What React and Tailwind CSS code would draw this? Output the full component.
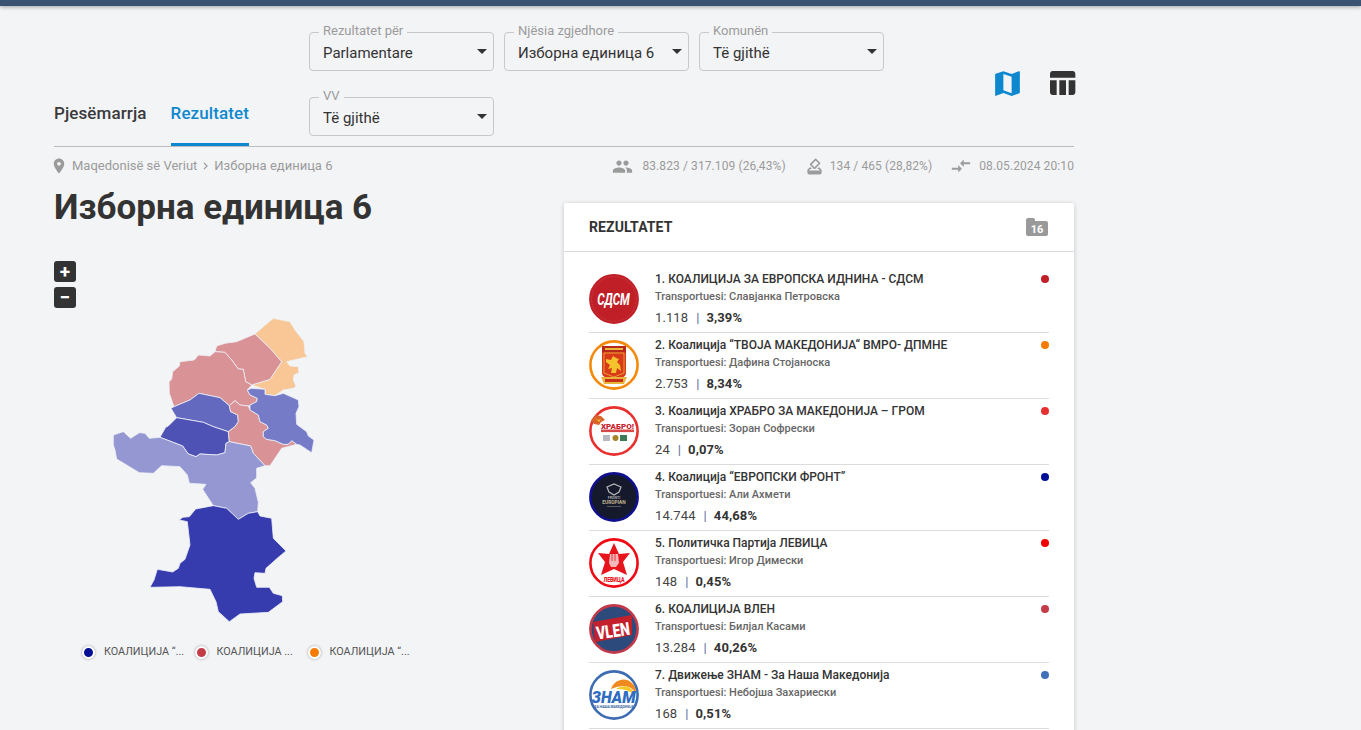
const P = {
  pin: "M12 2C8.13 2 5 5.13 5 9c0 5.25 7 13 7 13s7-7.75 7-13c0-3.87-3.13-7-7-7zm0 9.5c-1.38 0-2.5-1.12-2.5-2.5s1.12-2.5 2.5-2.5 2.5 1.12 2.5 2.5-1.12 2.5-2.5 2.5z",
  people: "M16 11c1.66 0 2.99-1.34 2.99-3S17.66 5 16 5c-1.66 0-3 1.34-3 3s1.34 3 3 3zm-8 0c1.66 0 2.99-1.34 2.99-3S9.66 5 8 5C6.34 5 5 6.34 5 8s1.34 3 3 3zm0 2c-2.33 0-7 1.17-7 3.5V19h14v-2.5c0-2.33-4.67-3.5-7-3.5zm8 0c-.29 0-.62.02-.97.05 1.16.84 1.97 1.97 1.97 3.45V19h6v-2.5c0-2.33-4.67-3.5-7-3.5z",
  vote: "M18 13h-.68l-2 2h1.91L19 17H5l1.78-2h2.05l-2-2H6l-3 3v4c0 1.1.89 2 1.99 2H19c1.1 0 2-.89 2-2v-4l-3-3zm-1-5.05l-4.95 4.95-3.54-3.54 4.95-4.95L17 7.95zm-4.24-5.66L6.39 8.66c-.39.39-.39 1.02 0 1.41l4.95 4.95c.39.39 1.02.39 1.41 0l6.36-6.36c.39-.39.39-1.02 0-1.41L14.16 2.3c-.38-.4-1.01-.4-1.4-.01z",
  arrows: "M9.01 14H2v2h7.01v3L13 15l-3.99-4v3zm5.98-1v-3H22V8h-7.01V5L11 9l3.99 4z",
  map: "M20.5 3l-.16.03L15 5.1 9 3 3.36 4.9c-.21.07-.36.25-.36.48V20.5c0 .28.22.5.5.5l.16-.03L9 18.9l6 2.1 5.64-1.9c.21-.07.36-.25.36-.48V3.5c0-.28-.22-.5-.5-.5zM15 19l-6-2.11V5l6 2.11V19z",
  table: "M10 10.02h5V21h-5zM17 21h3c1.1 0 2-.9 2-2v-9h-5v11zm3-18H5c-1.1 0-2 .9-2 2v3h19V5c0-1.1-.9-2-2-2zM3 19c0 1.1.9 2 2 2h3V10H3v9z",
};

function Ico({ d, className }) {
  return (
    <svg viewBox="0 0 24 24" className={className} fill="currentColor">
      <path d={d} />
    </svg>
  );
}

function Select({ label, value }) {
  return (
    <div className="relative flex h-[39px] w-[185px] items-center rounded-[4px] border border-[#c8c8c8] pl-[13px] pt-[2px]">
      <span className="absolute -top-[10px] left-[9px] bg-[#f3f4f6] px-[4px] text-[13px] leading-[16px] text-[#9b9b9b]">{label}</span>
      <span className="text-[15px] leading-[20px] text-[#333]">{value}</span>
      <svg viewBox="0 0 10 5" className="absolute right-[6px] top-[16px] h-[5px] w-[10px] text-[#333]" fill="currentColor">
        <path d="M0 0h10L5 5z" />
      </svg>
    </div>
  );
}

function Stat({ d, icon, text, gap }) {
  return (
    <span className={`flex items-center ${gap}`}>
      <Ico d={d} className={icon} />
      <span>{text}</span>
    </span>
  );
}

function Ring({ color, bg = "#fff", children }) {
  return (
    <svg viewBox="0 0 50 50" className="h-[50px] w-[50px] shrink-0">
      <circle cx="25" cy="25" r="23.6" fill={bg} stroke={color} strokeWidth="2.6" />
      {children}
    </svg>
  );
}

const LOGOS = [
  <Ring key="1" color="#c01f28" bg="#c01f28">
    <circle cx="25" cy="25" r="22.4" fill="none" stroke="#d8666c" strokeWidth=".5" strokeDasharray="1 1.2" />
    <text textAnchor="middle" fontSize="16" fontWeight="700" fontStyle="italic" fill="#fff" fontFamily="Roboto, sans-serif" transform="translate(24.5 31) scale(0.72 1)">СДСМ</text>
  </Ring>,
  <Ring key="2" color="#f58a0a">
    <path d="M13 6h24v27c0 4-6 6-12 8-6-2-12-4-12-8z" fill="#d93a1a" />
    <path d="M13 6h24v6H13z" fill="#b8281a" />
    <path d="M16 8h18v2H16z" fill="#e9b93a" />
    <path d="M15 13h20v20l-10 4-10-4z" fill="none" stroke="#e9b93a" strokeWidth=".8" />
    <path d="M17 19l5 1 2-4 3 2 3 1-2 3 3 3 1 6-4-3-1 5-5 0 1-5-4 1 2-4-4-3z" fill="#f3c22c" />
    <path d="M12 37h26l-3 7H15z" fill="#e8b43a" />
    <path d="M16 39h18v3H16z" fill="#c9301a" />
  </Ring>,
  <Ring key="3" color="#e8302e">
    <path d="M2 14l5-5 5 1 4 4-4 2-2 3-5-1z" fill="#d8622a" />
    <path d="M6 12l3 2 3-1-2 3z" fill="#f3c22c" />
    <text x="28.5" y="22.5" textAnchor="middle" fontSize="8" fontWeight="900" fill="#c8202a" fontFamily="Roboto, sans-serif" textLength="33" lengthAdjust="spacingAndGlyphs">ХРАБРО!</text>
    <rect x="12" y="23.5" width="33" height="2.6" fill="#d84a4a" />
    <rect x="14" y="29" width="7" height="6" fill="#b8b8c0" />
    <circle cx="26.5" cy="32" r="3" fill="#a8832a" />
    <rect x="31" y="29" width="7" height="6" fill="#3c7a56" />
  </Ring>,
  <Ring key="4" color="#10108f" bg="#14192c">
    <path d="M18 15l7-3 7 3-2 5-5 3-5-3z" fill="none" stroke="#b9b9b9" strokeWidth="1.2" />
    <text x="25" y="27" textAnchor="middle" fontSize="3.6" fontWeight="700" fill="#a8a8a8" fontFamily="Roboto, sans-serif">FRONTI</text>
    <text x="25" y="32" textAnchor="middle" fontSize="4.8" fontWeight="700" fill="#c4b58c" fontFamily="Roboto, sans-serif">EUROPIAN</text>
    <rect x="18" y="34" width="14" height=".8" fill="#6a6a6a" />
  </Ring>,
  <Ring key="5" color="#f00a14">
    <path d="M25 5l5 11 11-1-7 9 4 13-13-6-13 6 4-13-7-9 11 1z" fill="#e8141c" />
    <path d="M21 16h8l1 9-3 4h-5l-2-4z" fill="#f3b8ba" />
    <path d="M23 16v7M26 16v7" stroke="#e8141c" strokeWidth=".8" />
    <text x="25" y="44" textAnchor="middle" fontSize="6.5" fontWeight="900" fill="#e8141c" fontFamily="Roboto, sans-serif" textLength="21" lengthAdjust="spacingAndGlyphs">ЛЕВИЦА</text>
  </Ring>,
  <Ring key="6" color="#c23a4a" bg="#2d4a7c">
    <path d="M4 18l39-7v20L6 38z" fill="#c4202c" />
    <text textAnchor="middle" fontSize="18" fontWeight="900" fill="#fff" fontFamily="Roboto, sans-serif" transform="rotate(-8 25 27) translate(24 33) scale(0.76 1)">VLEN</text>
  </Ring>,
  <Ring key="7" color="#3e6cb2">
    <path d="M22 19c3-9 14-13 21-6 3 3 4 6 4 10-6-8-13-9-25-4z" fill="#f08a1e" />
    <path d="M27 19c6-4 13-4 17 2l2 5c-5-6-11-7-19-7z" fill="#f6c821" />
    <text textAnchor="middle" fontSize="17" fontWeight="900" fontStyle="italic" fill="#2f6cc0" fontFamily="Roboto, sans-serif" transform="translate(24.5 33) scale(0.92 1)">ЗНАМ</text>
    <text x="25" y="38" textAnchor="middle" fontSize="3.4" fontWeight="700" fill="#2f5c9c" fontFamily="Roboto, sans-serif">ЗА НАША МАКЕДОНИЈА</text>
  </Ring>,
];

const ROWS = [
  ["1. КОАЛИЦИЈА ЗА ЕВРОПСКА ИДНИНА - СДСМ", "Славјанка Петровска", "1.118", "3,39%", "bg-[#c01f28]"],
  ["2. Коалиција “ТВОЈА МАКЕДОНИЈА“ ВМРО- ДПМНЕ", "Дафина Стојаноска", "2.753", "8,34%", "bg-[#f57c00]"],
  ["3. Коалиција ХРАБРО ЗА МАКЕДОНИЈА – ГРОМ", "Зоран Софрески", "24", "0,07%", "bg-[#e53030]"],
  ["4. Коалиција “ЕВРОПСКИ ФРОНТ”", "Али Ахмети", "14.744", "44,68%", "bg-[#000f96]"],
  ["5. Политичка Партија ЛЕВИЦА", "Игор Димески", "148", "0,45%", "bg-[#f00000]"],
  ["6. КОАЛИЦИЈА ВЛЕН", "Билјал Касами", "13.284", "40,26%", "bg-[#c43c48]"],
  ["7. Движење ЗНАМ - За Наша Македонија", "Небојша Захариески", "168", "0,51%", "bg-[#4070b8]"],
];

function Row({ row, logo }) {
  const [name, person, votes, pct, dot] = row;
  return (
    <div className="flex h-[66px] border-b border-[#dcdcdc] pt-[7px]">
      {logo}
      <div className="ml-[16px] min-w-0 flex-1">
        <div className="flex h-[10px] items-center justify-between">
          <span className="whitespace-nowrap text-[12px] font-medium leading-[14px] text-[#333]">{name}</span>
          <span className={`h-[8px] w-[8px] rounded-full ${dot}`} />
        </div>
        <div className="mt-[6px] text-[11px] font-medium leading-[14px] text-[#666]">
          Transportuesi: {person}
        </div>
        <div className="mt-[6px] flex items-center text-[13px] leading-[16px] tracking-[0.1px] text-[#444]">
          <span>{votes}</span>
          <span className="ml-[8px] mr-[7px] text-[#5a6a9a]">|</span>
          <span className="font-bold text-[#333]">{pct}</span>
        </div>
      </div>
    </div>
  );
}

function Shapes() {
  const stroke = { stroke: "#eef0f6", strokeWidth: 2.4, strokeLinejoin: "round" };
  return (
    <svg viewBox="105 315 215 310" className="h-[310px] w-[215px]">
      <g transform="translate(100 310) scale(0.33333)" {...stroke}>
        <polygon fill="#f8c795" points="465,72 490,50 520,25 570,35 585,60 612,95 615,130 623,140 590,148 560,155 570,168 595,170 597,188 582,195 580,210 588,228 580,235 550,240 525,257 495,253 495,238 455,225 510,208 545,155 510,115" />
        <polygon fill="#d99296" points="465,72 410,95 375,100 350,108 345,125 375,127 395,150 415,177 430,178 437,215 455,225 510,208 545,155 510,115" />
        <polygon fill="#d99296" points="345,125 330,138 295,135 283,150 240,155 238,168 218,185 215,208 207,215 208,250 222,290 270,270 297,250 360,263 388,287 405,272 420,285 445,288 470,275 472,265 450,255 442,240 455,225 437,215 430,178 415,177 395,150 375,127" />
        <polygon fill="#6369bf" points="222,290 270,270 297,250 360,263 388,287 392,305 413,315 415,335 405,350 385,365 340,350 310,337 230,323 213,295" />
        <polygon fill="#4e52b5" points="230,323 310,337 340,350 385,365 388,395 378,400 375,428 350,435 300,432 288,440 265,432 248,408 180,382 197,352 205,348" />
        <polygon fill="#d99296" points="388,287 405,272 420,285 445,288 450,300 475,315 480,335 500,345 505,355 490,365 490,380 500,388 525,392 550,403 565,403 575,392 590,403 545,415 510,467 495,467 460,430 452,408 388,395 385,365 405,350 415,335 413,315 392,305" />
        <polygon fill="#757bc7" points="455,235 495,238 495,253 525,257 550,250 595,270 597,290 588,310 590,343 620,365 625,378 642,390 635,428 600,405 590,403 575,392 565,403 550,403 525,392 500,388 490,380 490,365 505,355 500,345 480,335 475,315 450,300 450,285 470,275 472,265 450,255 442,240" />
        <polygon fill="#9497d1" points="40,375 70,365 92,385 118,368 135,370 148,385 180,382 248,408 265,432 288,440 300,432 350,435 375,428 378,400 388,395 452,408 460,430 495,467 470,475 470,504 452,518 465,535 475,577 473,605 445,610 415,628 380,595 340,587 308,538 318,523 268,520 262,495 240,470 185,467 160,490 118,488 50,447 45,420 40,405" />
      </g>
      <g transform="translate(130 470) scale(0.33333)" {...stroke}>
        <polygon fill="#363bae" points="250,107 290,115 325,148 355,130 383,125 390,138 425,145 430,205 468,243 445,262 408,295 405,310 375,308 372,325 380,352 418,352 430,370 457,377 458,395 415,427 330,432 298,455 265,425 258,395 240,358 150,350 60,352 72,330 82,298 128,306 145,295 150,280 165,268 180,225 172,155 148,150 158,142 178,140 197,117" />
      </g>
    </svg>
  );
}

function Legend({ dot, text, width }) {
  return (
    <div className={`flex items-center ${width}`}>
      <span className={`h-[13px] w-[13px] rounded-full border-[2px] border-white shadow-[0_0_3px_rgba(0,0,0,0.35)] ${dot}`} />
      <span className="ml-[9px] whitespace-nowrap text-[10.8px] leading-[14px] text-[#555]">{text}</span>
    </div>
  );
}

export default function App() {
  return (
    <div className="h-[730px] overflow-hidden bg-[#f3f4f6] font-['Roboto',sans-serif]">
      <div className="h-[6px] bg-[#3a5274] shadow-[0_1px_4px_rgba(0,0,0,0.35)]" />
      <div className="ml-[54px] w-[1020px]">
        <div className="flex h-[141px] border-b border-[#bdbdbd]">
          <div className="flex h-[140px] w-[255px] shrink-0 items-end gap-[24px]">
            <div className="flex h-[60px] items-center whitespace-nowrap pb-[7px] text-[17px] font-medium leading-[20px] tracking-[0.1px] text-[#3a3a3a]">Pjesëmarrja</div>
            <div className="flex h-[60px] items-center whitespace-nowrap border-b-[3px] border-[#0d88cf] pb-[4px] text-[17px] font-medium leading-[20px] tracking-[0.1px] text-[#0d88cf]">Rezultatet</div>
          </div>
          <div className="flex h-fit w-[600px] shrink-0 flex-wrap gap-x-[10px] gap-y-[26px] pt-[26px]">
            <Select label="Rezultatet për" value="Parlamentare" />
            <Select label="Njësia zgjedhore" value="Изборна единица 6" />
            <Select label="Komunën" value="Të gjithë" />
            <Select label="VV" value="Të gjithë" />
          </div>
          <div className="-mr-[4px] ml-auto flex h-fit items-start gap-[22px] pt-[61px]">
            <Ico d={P.map} className="h-[33px] w-[33px] text-[#0d88cf]" />
            <Ico d={P.table} className="h-[32px] w-[32px] text-[#333]" />
          </div>
        </div>

        <div className="flex h-[38px] items-center text-[13px] leading-[16px] text-[#9b9b9b]">
          <Ico d={P.pin} className="-ml-[4px] h-[18px] w-[18px] text-[#9b9b9b]" />
          <span className="ml-[4px]">Maqedonisë së Veriut</span>
          <svg viewBox="0 0 6 10" className="ml-[6px] mr-[6px] h-[8px] w-[5px]" fill="none" stroke="currentColor" strokeWidth="1.5"><path d="M1 1l4 4-4 4" /></svg>
          <span>Изборна единица 6</span>
          <div className="ml-auto flex items-center text-[12px] tracking-[0.1px]">
            <Stat d={P.people} icon="h-[21px] w-[21px]" gap="gap-[9px]" text="83.823 / 317.109 (26,43%)" />
            <Stat d={P.vote} icon="ml-[19px] h-[19px] w-[19px]" gap="gap-[6px]" text="134 / 465 (28,82%)" />
            <Stat d={P.arrows} icon="ml-[18px] h-[22px] w-[22px]" gap="gap-[7px]" text="08.05.2024 20:10" />
          </div>
        </div>

        <div className="flex">
          <div className="w-[510px] shrink-0">
            <h1 className="pt-[1px] text-[35px] font-bold leading-[44px] text-[#333]">Изборна единица 6</h1>
            <div className="mt-[31px] flex flex-col gap-[5px]">
              <div className="flex h-[21px] w-[22px] items-center justify-center rounded-[3px] bg-[#333] text-[19px] font-bold leading-none text-white">+</div>
              <div className="flex h-[21px] w-[22px] items-center justify-center rounded-[3px] bg-[#333] text-[19px] font-bold leading-none text-white">−</div>
            </div>
            <div className="ml-[51px] mt-[7px]">
              <Shapes />
            </div>
            <div className="ml-[28px] mt-[20px] flex">
              <Legend dot="bg-[#000f96]" text="КОАЛИЦИЈА “..." width="w-[112.5px]" />
              <Legend dot="bg-[#c43c48]" text="КОАЛИЦИЈА ..." width="w-[113px]" />
              <Legend dot="bg-[#f57c00]" text="КОАЛИЦИЈА “..." width="w-[110px]" />
            </div>
          </div>
          <div className="mt-[18px] h-[560px] w-[510px] shrink-0 rounded-[2px] bg-white px-[25px] shadow-[0_1px_5px_rgba(0,0,0,0.2)]">
            <div className="-mx-[25px] flex h-[49px] items-center justify-between border-b border-[#dcdcdc] pl-[25px] pr-[26px]">
              <span className="text-[14px] font-bold leading-[18px] tracking-[0.1px] text-[#333]">REZULTATET</span>
              <span className="relative mt-[3px] flex h-[15px] w-[22px] items-center justify-center rounded-[2px] bg-[#999] pt-[1px] text-[11px] font-bold leading-none text-white before:absolute before:-top-[3px] before:left-0 before:h-[4px] before:w-[9px] before:rounded-t-[2px] before:bg-[#999] before:content-['']">16</span>
            </div>
            <div className="pt-[15px]">
              {ROWS.map((r, i) => (
                <Row key={i} row={r} logo={LOGOS[i]} />
              ))}
            </div>
          </div>
        </div>
      </div>
    </div>
  );
}
